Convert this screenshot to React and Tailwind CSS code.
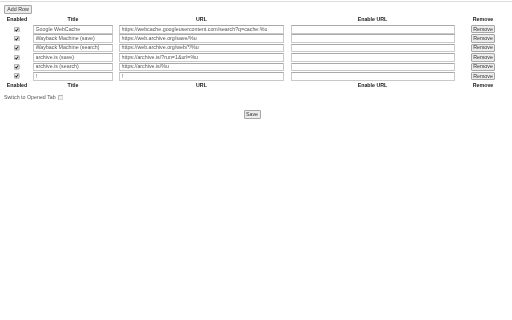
import React from "react";

const ROWS = [
  { title: "Google WebCache", url: "https://webcache.googleusercontent.com/search?q=cache:%u" },
  { title: "Wayback Machine (save)", url: "https://web.archive.org/save/%u" },
  { title: "Wayback Machine (search)", url: "https://web.archive.org/web/*/%u" },
  { title: "archive.is (save)", url: "https://archive.is/?run=1&url=%u" },
  { title: "archive.is (search)", url: "https://archive.is/%u" },
  { title: "!", url: "!" },
];

const COLS = "grid grid-cols-[26px_86px_171px_171px_50px]";

function Check({ checked }) {
  return (
    <svg viewBox="0 0 12 12" className="h-[5.5px] w-[5.5px]">
      <rect x="0.75" y="0.75" width="10.5" height="10.5" rx="1" fill="#f2f2f2" stroke="#8a8a8a" strokeWidth="1.5" />
      {checked && <path d="M3 6.2 L5.2 8.6 L9.2 3.2" fill="none" stroke="#202020" strokeWidth="2.2" />}
    </svg>
  );
}

function Field({ value, width }) {
  return (
    <div
      className={`flex h-[8.6px] items-center border border-[#c9c9c9] border-t-[#a9a9a9] bg-white px-[1.5px] text-[5.3px] leading-none text-[#555] ${width}`}
    >
      <span className="truncate">{value}</span>
    </div>
  );
}

function Btn({ children, className = "" }) {
  return (
    <button
      className={`flex items-center justify-center rounded-[1px] border border-[#a6a6a6] bg-[#ececec] text-[5.3px] leading-none text-[#333] ${className}`}
    >
      {children}
    </button>
  );
}

function HeadRow() {
  return (
    <div className={`${COLS} h-[9.6px] items-center text-[5.3px] font-bold leading-none text-[#1a1a1a]`}>
      <div className="text-center">Enabled</div>
      <div className="text-center">Title</div>
      <div className="text-center">URL</div>
      <div className="text-center">Enable URL</div>
      <div className="text-center">Remove</div>
    </div>
  );
}

export default function App() {
  return (
    <div className="h-[320px] w-[512px] overflow-hidden bg-white font-['Liberation_Sans',Arial,sans-serif] [will-change:transform]">
      <div className="mt-[1px] h-[1px] bg-[#dcdcdc]" />
      <div className="px-[4px] pt-[3px]">
        <div className="flex">
          <Btn className="h-[9px] w-[28px]">Add Row</Btn>
        </div>
        <div className="mt-[1px]">
          <HeadRow />
          {ROWS.map((row, i) => (
            <div key={i} className={`${COLS} h-[9.4px] items-center`}>
              <div className="flex justify-center">
                <Check checked />
              </div>
              <div className="flex justify-center">
                <Field value={row.title} width="w-[80px]" />
              </div>
              <div className="flex justify-center">
                <Field value={row.url} width="w-[165px]" />
              </div>
              <div className="flex justify-center">
                <Field value="" width="w-[164px]" />
              </div>
              <div className="flex justify-center">
                <Btn className="h-[8.4px] w-[24px]">Remove</Btn>
              </div>
            </div>
          ))}
          <HeadRow />
        </div>
        <div className="mt-[4px] flex items-center gap-[2px] text-[5.3px] leading-none text-[#555]">
          <span>Switch to Opened Tab</span>
          <Check checked={false} />
        </div>
        <div className="mt-[10px] flex justify-center pr-[8px]">
          <Btn className="h-[9px] w-[17px]">Save</Btn>
        </div>
      </div>
    </div>
  );
}
